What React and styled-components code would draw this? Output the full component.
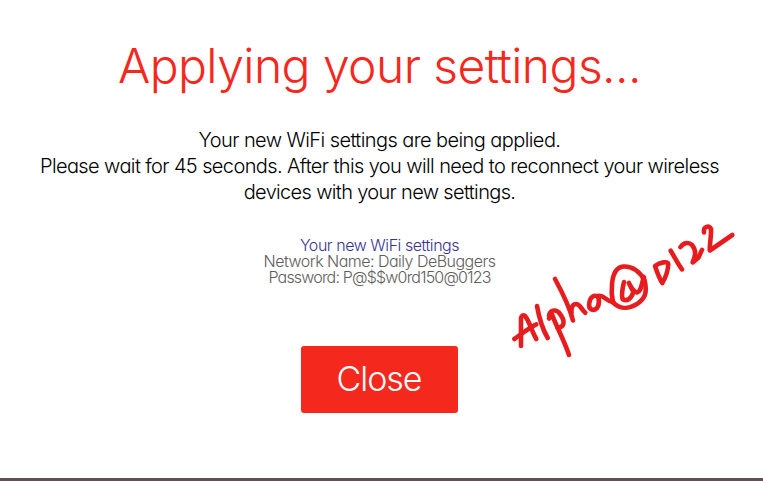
import React from "react";
import styled, { createGlobalStyle } from "styled-components";

const GlobalStyle = createGlobalStyle`
  * { box-sizing: border-box; }
  body {
    margin: 0;
    background: #fff;
    font-family: Inter, "Liberation Sans", sans-serif;
    font-feature-settings: "cv11" 1;
    overflow: hidden;
  }
`;

const Page = styled.main`
  position: relative;
  display: flex;
  flex-direction: column;
  align-items: center;
  width: 763px;
  height: 481px;
  padding: 36px 4px 0 0;
  border-bottom: 3px solid #5f4f58;
  background: #fff;
  text-align: center;
  white-space: nowrap;
`;

const Title = styled.h1`
  margin: 0;
  height: 62px;
  font-size: 48px;
  line-height: 60px;
  font-weight: 300;
  letter-spacing: -0.56px;
  color: #f5281e;
`;

const Message = styled.div`
  margin-top: 29px;
  font-size: 20px;
  line-height: 26px;
  font-weight: 300;
  color: #000;
`;

const Details = styled.div`
  margin-top: 32px;
  font-size: 16px;
  line-height: 16px;
  font-weight: 300;
`;

const Line = styled.div`
  letter-spacing: ${(p) => p.$spacing || 0}px;
  color: ${(p) => p.$color || "inherit"};
`;

const CloseButton = styled.button`
  width: 157px;
  height: 67px;
  margin-top: 61px;
  padding: 0 1px 2px 0;
  border: 0;
  border-radius: 3px;
  background: #f5281e;
  color: #fff;
  font: inherit;
  font-size: 34px;
  font-weight: 300;
  letter-spacing: -1px;
`;

const Handwriting = styled.svg`
  position: absolute;
  left: 500px;
  top: 215px;
  fill: none;
  stroke: #e61c1e;
  stroke-width: 4.6;
  stroke-linecap: round;
  stroke-linejoin: round;
`;

const strokes = [
  "M521 346V318Q522 314 525 316C529 320 531 330 536.3 339",
  "M514.3 339C520 335 530 327 536.3 324.3",
  "M537 306C539 317 543 330 547.7 338",
  "M549 318.5L552 314.5C554 321 565 342 569 355",
  "M549 316C550 309 557 309 560 314C566 322 564 327 557.5 328",
  "M555 279C561 290 569 305 573 320.5C570 313 571 304 576 304C580 304 581 309 585.3 312.7",
  "M599 297C594 294 590 297 589.3 303C588 309 593 312 597 308C600 304 599 300 598 296C604 294 605 301 613.5 302.3",
  "M613 302.5C611.5 296 611.5 289 612 284C613 273 617 267 623.5 266.5C635 266 641 274 644.5 280C648 294 644 299 637 304C627 310 620 309 613 302.5",
  "M624 282C622.5 288 621.5 295 622.5 299C627 302 631 299 633.5 292C632 289 630 286 628.8 282.8C631 287 633 292 637 292.5C642 291 641 284 644 277",
  "M655 266C657 272 659 278 662.3 283C666 277 668 270 668.3 264C668 261 660 262 655 266Z",
  "M670.7 250.7C674 256 678 264 682 269.3",
  "M680.5 247C684 242 689 242 692 245C697 251 695 257 692.7 262.5L698 258C700 256 700 253 702 250",
  "M704 232.5C703 226 709 225 711 229C711.5 235 709.5 244 709.8 250.5L732.3 235",
];

export default function App() {
  return (
    <>
      <GlobalStyle />
      <Page>
        <Title>Applying your settings...</Title>
        <Message>
          <Line $spacing={-0.58}>Your new WiFi settings are being applied.</Line>
          <Line $spacing={-0.61}>Please wait for 45 seconds. After this you will need to reconnect your wireless</Line>
          <Line $spacing={-0.66}>devices with your new settings.</Line>
        </Message>
        <Details>
          <Line $spacing={-0.45} $color="#37328f">Your new WiFi settings</Line>
          <Line $spacing={-0.52} $color="#5f5d5d">Network Name: Daily DeBuggers</Line>
          <Line $spacing={-0.81} $color="#5f5d5d">Password: P@$$w0rd150@0123</Line>
        </Details>
        <CloseButton type="button">Close</CloseButton>
        <Handwriting width="240" height="150" viewBox="500 215 240 150" aria-label="Alpha@0122">
          {strokes.map((d) => (
            <path key={d} d={d} />
          ))}
        </Handwriting>
      </Page>
    </>
  );
}
